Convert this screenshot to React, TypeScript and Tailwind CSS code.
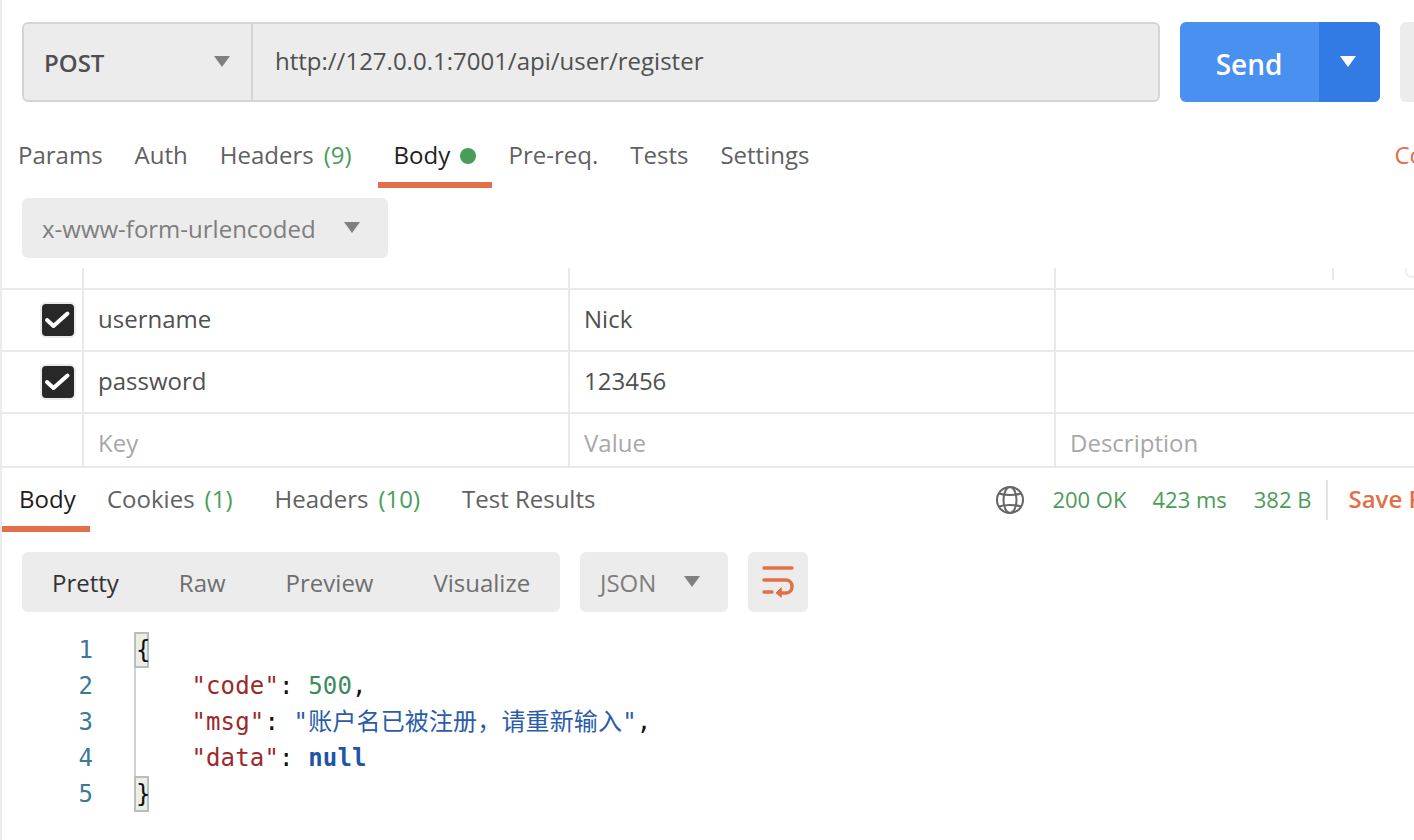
import React from 'react';

const Caret = ({ className }: { className: string }) => (
  <svg className={`shrink-0 ${className}`} width="16" height="12" viewBox="0 0 16 12">
    <path d="M0 0H16L8 11Z" fill="currentColor" />
  </svg>
);

const Count = ({ children }: { children: React.ReactNode }) => (
  <span className="ml-[10px] text-[#4a9d58]">{children}</span>
);

const Check = () => (
  <div className="flex h-[36px] w-[36px] shrink-0 items-center justify-center rounded-[6px] border-2 border-[#ececec] bg-[#282828]">
    <svg className="shrink-0" width="32" height="32" viewBox="0 0 32 32" fill="none">
      <path d="M5 16L11.5 22L25.5 9.5" stroke="white" strokeWidth="4" strokeLinecap="round" strokeLinejoin="round" />
    </svg>
  </div>
);

function Row({ k, v, d, checked, muted }: { k: string; v: string; d?: string; checked?: boolean; muted?: boolean }) {
  return (
    <div className={`flex ${muted ? 'h-[52px] text-[#a8a8a8]' : 'h-[62px] border-b-2 border-[#e9e9e9] text-[#505050]'}`}>
      <div className="flex w-[80px] shrink-0 items-center justify-end pr-[6px]">{checked && <Check />}</div>
      <div className="w-[486px] shrink-0 border-l-2 border-[#e9e9e9] pl-[14px] pt-[13px]">{k}</div>
      <div className="w-[486px] shrink-0 border-l-2 border-[#e9e9e9] pl-[14px] pt-[13px]">{v}</div>
      <div className="flex-1 border-l-2 border-[#e9e9e9] pl-[14px] pt-[13px]">{d}</div>
    </div>
  );
}

function CodeLine({ n, children }: { n: number; children: React.ReactNode }) {
  return (
    <div className="flex h-[36px] items-center">
      <div className="w-[91px] shrink-0 text-right text-[#3b7a94]">{n}</div>
      <div className="ml-[40px] whitespace-pre tracking-[0.15px]">{children}</div>
    </div>
  );
}

const Brace = ({ c }: { c: string }) => (
  <span className="ml-[1px] inline-block h-[36px] w-[15px] border-2 border-[#bcbcbc] bg-[#e9efe7] text-center leading-[32px] text-[#111]">
    {c}
  </span>
);

export default function App() {
  return (
    <div className="h-[840px] w-[1414px] overflow-hidden border-l-2 border-[#ececec] bg-white font-['Open_Sans',sans-serif] text-[24px] leading-[32px] whitespace-nowrap">
      {/* url bar */}
      <div className="flex pl-[20px] pt-[22px]">
        <div className="flex h-[80px] w-[1138px] shrink-0 rounded-[6px] border-2 border-[#d4d4d4] bg-[#ececec]">
          <div className="flex w-[229px] shrink-0 items-center border-r-2 border-[#d4d4d4] pl-[20px] pr-[21px] font-semibold text-[#4f4f4f]">
            <span className="pt-[2px]">POST</span>
            <Caret className="ml-auto text-[#808080]" />
          </div>
          <div className="pl-[22px] pt-[21px] text-[#505050]">http://127.0.0.1:7001/api/user/register</div>
        </div>
        <div className="ml-[20px] flex h-[80px] w-[200px] shrink-0 overflow-hidden rounded-[6px] bg-[#4a90f0] text-white">
          <div className="flex w-[139px] shrink-0 items-center justify-center pr-[1px] pt-[3px] text-[28px] font-semibold">Send</div>
          <div className="flex flex-1 items-center justify-center bg-[#327ae4] pr-[3px]">
            <Caret className="" />
          </div>
        </div>
        <div className="ml-[20px] h-[80px] w-[40px] shrink-0 rounded-[6px] bg-[#ececec]" />
      </div>

      {/* request tabs */}
      <div className="flex h-[60px] pt-[37px] text-[#616161]">
        <span className="ml-[16px] shrink-0">Params</span>
        <span className="ml-[32px] shrink-0">Auth</span>
        <span className="ml-[32px] shrink-0">Headers<Count>(9)</Count></span>
        <div className="relative ml-[26px] flex w-[114px] shrink-0 pl-[16px] text-[#1e1e1e]">
          <span>Body</span>
          <span className="ml-[10px] mt-[9px] h-[16px] w-[16px] rounded-full bg-[#4a9d58]" />
          <div className="absolute bottom-[-26px] left-0 h-[6px] w-[114px] bg-[#e26f48]" />
        </div>
        <span className="ml-[17px] shrink-0">Pre-req.</span>
        <span className="ml-[32px] shrink-0">Tests</span>
        <span className="ml-[32px] shrink-0">Settings</span>
        <span className="ml-[585px] shrink-0 text-[#e26f48]">Cookies</span>
      </div>

      {/* body type */}
      <div className="mt-[36px] pl-[20px]">
        <div className="flex h-[60px] w-[366px] items-center rounded-[6px] bg-[#ececec] pl-[20px] pr-[28px] pt-[2px] text-[#7e7e7e]">
          x-www-form-urlencoded
          <Caret className="ml-auto -mt-[2px] text-[#808080]" />
        </div>
      </div>

      {/* params table */}
      <div className="mt-[10px]">
        <div className="flex h-[22px] border-b-2 border-[#e9e9e9]">
          <div className="w-[80px] shrink-0" />
          <div className="w-[486px] shrink-0 border-l-2 border-[#e9e9e9]" />
          <div className="w-[486px] shrink-0 border-l-2 border-[#e9e9e9]" />
          <div className="flex flex-1 items-start border-l-2 border-[#e9e9e9]">
            <div className="ml-[276px] h-[12px] w-[2px] bg-[#e9e9e9]" />
            <div className="ml-[71px] h-[10px] w-[14px] rounded-b-full border-2 border-t-0 border-[#f0f0f0]" />
          </div>
        </div>
        <Row k="username" v="Nick" checked />
        <Row k="password" v="123456" checked />
        <Row k="Key" v="Value" d="Description" muted />
      </div>

      {/* response tabs */}
      <div className="flex h-[66px] items-start border-t-2 border-[#e9e9e9] pt-[15px] text-[#616161]">
        <div className="relative w-[88px] shrink-0 pl-[17px] text-[#1e1e1e]">
          Body
          <div className="absolute bottom-[-17px] left-0 h-[6px] w-[88px] bg-[#e26f48]" />
        </div>
        <span className="ml-[17px] shrink-0">Cookies<Count>(1)</Count></span>
        <span className="ml-[42px] shrink-0">Headers<Count>(10)</Count></span>
        <span className="ml-[42px] shrink-0">Test Results</span>
        <svg className="ml-[401px] mt-[3px] shrink-0 text-[#666]" width="28" height="28" viewBox="0 0 28 28" fill="none" stroke="currentColor" strokeWidth="2">
          <circle cx="14" cy="14" r="13" />
          <ellipse cx="14" cy="14" rx="6.5" ry="13" />
          <path d="M3 7.5C9 9.5 19 9.5 25 7.5M3 20.5C9 18.5 19 18.5 25 20.5" />
        </svg>
        <div className="ml-[28px] flex shrink-0 text-[22px] text-[#4a9d58]">
          <span>200 OK</span>
          <span className="ml-[26px]">423 ms</span>
          <span className="ml-[27px]">382 B</span>
        </div>
        <div className="ml-[15px] mt-[-3px] h-[40px] w-[2px] shrink-0 bg-[#e4e4e4]" />
        <span className="ml-[20px] shrink-0 font-semibold text-[#e26f48]">Save Response</span>
      </div>

      {/* view options */}
      <div className="mt-[20px] flex pl-[20px] text-[#6f6f6f]">
        <div className="flex h-[60px] w-[538px] shrink-0 items-center rounded-[6px] bg-[#ececec] pt-[2px]">
          <span className="ml-[30px] text-[#333]">Pretty</span>
          <span className="ml-[60px]">Raw</span>
          <span className="ml-[60px]">Preview</span>
          <span className="ml-[60px]">Visualize</span>
        </div>
        <div className="ml-[20px] flex h-[60px] w-[148px] shrink-0 items-center rounded-[6px] bg-[#ececec] pl-[20px] pr-[28px] pt-[2px] text-[#7e7e7e]">
          JSON
          <Caret className="ml-auto -mt-[2px] text-[#808080]" />
        </div>
        <div className="ml-[20px] flex h-[60px] w-[60px] shrink-0 items-center justify-center rounded-[6px] bg-[#ececec]">
          <svg className="shrink-0" width="32" height="32" viewBox="0 0 32 32" fill="none" stroke="#e26f48" strokeWidth="3.5" strokeLinecap="round">
            <path d="M2 2H30" />
            <path d="M2 14H24C32 14 32 27 24 27H17" />
            <path d="M2 26H10" />
            <path d="M19 22L14 27L19 31Z" fill="#e26f48" strokeWidth="1" />
          </svg>
        </div>
      </div>

      {/* response json */}
      <div className="relative mt-[20px] font-['DejaVu_Sans_Mono','Noto_Sans_CJK_SC',monospace] text-[24px] leading-[36px]">
        <div className="absolute left-[132px] top-[36px] h-[108px] w-[2px] bg-[#d0d0d0]" />
        <CodeLine n={1}><Brace c="{" /></CodeLine>
        <CodeLine n={2}>
          {'    '}<span className="text-[#9c2a2a]">"code"</span><span className="text-[#111]">: </span><span className="text-[#3d8a5f]">500</span><span className="text-[#111]">,</span>
        </CodeLine>
        <CodeLine n={3}>
          {'    '}<span className="text-[#9c2a2a]">"msg"</span><span className="text-[#111]">: </span><span className="text-[#2a5caa]">"账户名已被注册，请重新输入"</span><span className="text-[#111]">,</span>
        </CodeLine>
        <CodeLine n={4}>
          {'    '}<span className="text-[#9c2a2a]">"data"</span><span className="text-[#111]">: </span><span className="font-bold text-[#1f55a8]">null</span>
        </CodeLine>
        <CodeLine n={5}><Brace c="}" /></CodeLine>
      </div>
    </div>
  );
}
